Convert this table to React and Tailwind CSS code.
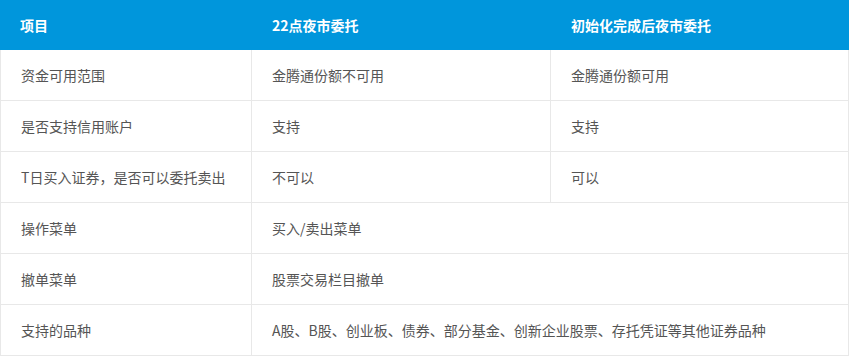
const rows = [
  { item: "资金可用范围", a: "金腾通份额不可用", b: "金腾通份额可用" },
  { item: "是否支持信用账户", a: "支持", b: "支持" },
  { item: "T日买入证券，是否可以委托卖出", a: "不可以", b: "可以" },
  { item: "操作菜单", both: "买入/卖出菜单" },
  { item: "撤单菜单", both: "股票交易栏目撤单" },
  { item: "支持的品种", both: "A股、B股、创业板、债券、部分基金、创新企业股票、存托凭证等其他证券品种" },
];

// body cells only draw bottom/right lines; the first column adds the left edge
const cell = "h-[51px] pl-5 border-b border-r border-[#e8e8e8] text-left align-middle";

export default function App() {
  return (
    <div className="w-[850px] bg-white" style={{ fontFamily: '"Microsoft YaHei", "Noto Sans CJK SC", sans-serif' }}>
      <table className="w-[849px] table-fixed border-separate border-spacing-0 text-[14px] text-[#555]">
        <colgroup>
          <col className="w-[252px]" />
          <col className="w-[299px]" />
          <col />
        </colgroup>
        <thead>
          <tr className="bg-[#0096dc] text-white">
            <th className="h-[50px] pl-5 text-left font-bold">项目</th>
            <th className="h-[50px] pl-5 text-left font-bold">22点夜市委托</th>
            <th className="h-[50px] pl-5 text-left font-bold">初始化完成后夜市委托</th>
          </tr>
        </thead>
        <tbody>
          {rows.map((r) => (
            <tr key={r.item}>
              <td className={`${cell} border-l`}>{r.item}</td>
              {r.both ? (
                <td className={cell} colSpan={2}>{r.both}</td>
              ) : (
                <>
                  <td className={cell}>{r.a}</td>
                  <td className={cell}>{r.b}</td>
                </>
              )}
            </tr>
          ))}
        </tbody>
      </table>
    </div>
  );
}
